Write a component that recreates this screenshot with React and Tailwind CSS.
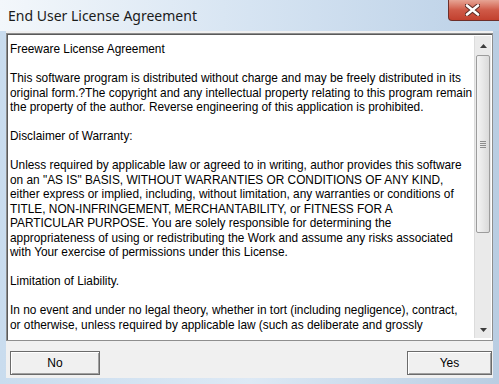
import React from 'react';

const lines = [
    'Freeware License Agreement',
    '',
    'This software program is distributed without charge and may be freely distributed in its',
    'original form.?The copyright and any intellectual property relating to this program remain',
    'the property of the author. Reverse engineering of this application is prohibited.',
    '',
    'Disclaimer of Warranty:',
    '',
    'Unless required by applicable law or agreed to in writing, author provides this software',
    'on an "AS IS" BASIS, WITHOUT WARRANTIES OR CONDITIONS OF ANY KIND,',
    'either express or implied, including, without limitation, any warranties or conditions of',
    'TITLE, NON-INFRINGEMENT, MERCHANTABILITY, or FITNESS FOR A',
    'PARTICULAR PURPOSE. You are solely responsible for determining the',
    'appropriateness of using or redistributing the Work and assume any risks associated',
    'with Your exercise of permissions under this License.',
    '',
    'Limitation of Liability.',
    '',
    'In no event and under no legal theory, whether in tort (including negligence), contract,',
    'or otherwise, unless required by applicable law (such as deliberate and grossly',
];

const ScrollBar = () => (
    <div className="w-[17px] h-full flex flex-col bg-[#eaeaea] border-l border-[#dcdcdc]">
        {/* Up arrow */}
        <div className="h-[19px] flex items-center justify-center">
            <svg width="7" height="4" viewBox="0 0 7 4"><path d="M0 4 L3.5 0 L7 4 Z" fill="#3c3c3c" /></svg>
        </div>
        {/* Thumb */}
        <div className="mx-px h-[178px] rounded-[2px] border border-[#9c9c9c] bg-gradient-to-r from-[#f4f4f4] to-[#dadada] flex items-center justify-center">
            <div className="flex flex-col gap-px">
                <div className="w-[6px] h-px bg-[#8d8d8d]" />
                <div className="w-[6px] h-px bg-[#8d8d8d]" />
                <div className="w-[6px] h-px bg-[#8d8d8d]" />
                <div className="w-[6px] h-px bg-[#8d8d8d]" />
            </div>
        </div>
        <div className="flex-1" />
        {/* Down arrow */}
        <div className="h-[17px] flex items-center justify-center">
            <svg width="7" height="4" viewBox="0 0 7 4"><path d="M0 0 L3.5 4 L7 0 Z" fill="#3c3c3c" /></svg>
        </div>
    </div>
);

const Button = ({ children, className }) => (
    <button className={`h-[24px] bg-[#f0f0f0] border border-[#6b6b6b] shadow-[inset_1px_1px_0_#ffffff,inset_-1px_-1px_0_#a0a0a0] text-[12px] text-black ${className}`}>
        {children}
    </button>
);

export default function App() {
    return (
        <div className="w-[499px] h-[384px] overflow-hidden relative bg-gradient-to-r from-[#c9dcee] via-[#dde9f5] to-[#b9cde2] font-['Liberation_Sans',Arial,sans-serif]">
            {/* Title bar */}
            <div className="h-[31px] flex items-center pl-[8px] bg-gradient-to-r from-[#f3f7fb] via-[#d6e4f2] to-[#bcd1e7]">
                <span className="text-[14px] text-[#1b1b1b] font-['Noto_Sans',sans-serif]">End User License Agreement</span>
            </div>

            {/* Close button */}
            <div className="absolute top-0 left-[448px] w-[56px] h-[21px] rounded-bl-[4px] border border-t-0 border-[#6d2f2a] bg-gradient-to-b from-[#e6a495] via-[#cf5a48] to-[#c2402e] flex items-center pl-[16px]">
                <svg width="15" height="12" viewBox="0 0 15 12">
                    <path d="M2 1.5 L13 10.5 M13 1.5 L2 10.5" stroke="#5a2a24" strokeWidth="4.5" strokeLinecap="round" />
                    <path d="M2 1.5 L13 10.5 M13 1.5 L2 10.5" stroke="#ffffff" strokeWidth="2.6" strokeLinecap="round" />
                </svg>
            </div>

            {/* Body */}
            <div className="mx-[6px] h-[347px] bg-[#f0f0f0] flex flex-col">
                <div className="h-[308px] mt-[2px] flex bg-white border border-[#8e8e8e] shadow-[inset_1px_1px_0_#5a5a5a]">
                    <div className="flex-1 pl-[3px] pt-[8px] text-[11.85px] leading-[14.5px] text-black overflow-hidden">
                        {lines.map((l, i) => (
                            <div key={i} className="whitespace-nowrap h-[14.5px]">{l || '\u00a0'}</div>
                        ))}
                    </div>
                    <div className="pt-[2px] pb-[2px] pr-[1px]">
                        <ScrollBar />
                    </div>
                </div>
                <div className="flex justify-between items-center mt-[10px] pl-[4px] pr-px">
                    <Button className="w-[90px]">No</Button>
                    <Button className="w-[85px]">Yes</Button>
                </div>
            </div>
        </div>
    );
}
